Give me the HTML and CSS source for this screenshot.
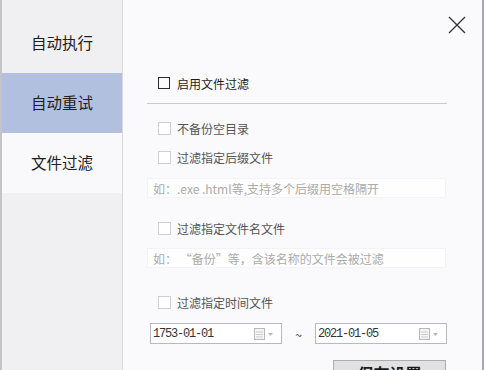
FILE: index.html
```html
<!DOCTYPE html>
<html lang="zh-CN">

<head>
    <meta charset="UTF-8">
    <meta name="viewport" content="width=device-width, initial-scale=1.0">
    <title>设置</title>
    <link rel="stylesheet" href="styles.css">
</head>

<body>
    <div class="window">
        <div class="sidebar">
            <div class="nav-item">自动执行</div>
            <div class="nav-item hover">自动重试</div>
            <div class="nav-item active">文件过滤</div>
        </div>
        <div class="panel">
            <div class="panel-head">
                <span class="close">
                    <svg width="18" height="18" viewBox="0 0 18 18">
                        <path d="M1 1 L17 17 M17 1 L1 17" stroke="#333" stroke-width="1.3" fill="none"/>
                    </svg>
                </span>
            </div>
            <div class="form">
                <label class="check-row main">
                    <span class="box"></span>启用文件过滤
                </label>
                <div class="divider"></div>
                <label class="check-row r-empty">
                    <span class="box"></span>不备份空目录
                </label>
                <label class="check-row r-suffix">
                    <span class="box"></span>过滤指定后缀文件
                </label>
                <div class="text-input in-suffix">如：.exe .html等,支持多个后缀用空格隔开</div>
                <label class="check-row r-name">
                    <span class="box"></span>过滤指定文件名文件
                </label>
                <div class="text-input in-name">如：&nbsp;&ldquo;备份&rdquo;等，含该名称的文件会被过滤</div>
                <label class="check-row r-time">
                    <span class="box"></span>过滤指定时间文件
                </label>
                <div class="date-row">
                    <div class="date">
                        <span class="date-text">1753-01-01</span>
                        <svg class="cal" width="22" height="12" viewBox="0 0 22 12">
                            <rect x="0.5" y="0.5" width="10" height="11" fill="#f4f4f4" stroke="#b8b8b8"/>
                            <path d="M2 4 H9 M2 6.5 H9 M2 9 H9" stroke="#cfcfcf" stroke-width="1"/>
                            <path d="M14 5 L19 5 L16.5 8 Z" fill="#b8b8b8"/>
                        </svg>
                    </div>
                    <span class="tilde">~</span>
                    <div class="date">
                        <span class="date-text">2021-01-05</span>
                        <svg class="cal" width="22" height="12" viewBox="0 0 22 12">
                            <rect x="0.5" y="0.5" width="10" height="11" fill="#f4f4f4" stroke="#b8b8b8"/>
                            <path d="M2 4 H9 M2 6.5 H9 M2 9 H9" stroke="#cfcfcf" stroke-width="1"/>
                            <path d="M14 5 L19 5 L16.5 8 Z" fill="#b8b8b8"/>
                        </svg>
                    </div>
                </div>
                <div class="actions">
                    <button class="save">保存设置</button>
                </div>
            </div>
        </div>
    </div>
</body>

</html>
```

FILE: styles.css
```css
* {
    margin: 0;
    padding: 0;
    box-sizing: border-box;
}
body {
    width: 484px;
    height: 370px;
    overflow: hidden;
    font-family: "Noto Sans CJK SC", "Noto Sans", sans-serif;
    background-color: #faf9fb;
}
.window {
    display: flex;
    height: 370px;
    border-left: 2px solid #c4c3c7;
    border-right: 2px solid #a9a8ac;
    overflow: hidden;
}
.sidebar {
    width: 121px;
    flex-shrink: 0;
    padding-top: 13px;
    background-color: #f0eff2;
    border-right: 1px solid #dad8dd;
}
.sidebar .nav-item {
    height: 60px;
    display: flex;
    align-items: center;
    justify-content: center;
    font-size: 15.5px;
    color: #1e1e1e;
    padding-bottom: 2px;
}
.sidebar .nav-item.hover {
    background-color: #b1c0de;
}
.sidebar .nav-item.active {
    background-color: #f9f8fa;
}
.panel {
    flex: 1;
    min-width: 0;
}
.panel .panel-head {
    height: 50px;
    display: flex;
    justify-content: flex-end;
    align-items: center;
    padding-right: 16px;
}
.panel .close {
    display: block;
    width: 18px;
    height: 18px;
    cursor: pointer;
}
.panel .close svg {
    display: block;
}
.form {
    padding-left: 24px;
    width: 324px;
}
.check-row {
    display: flex;
    align-items: center;
    height: 20px;
    padding-left: 11px;
    font-size: 12px;
    color: #555;
}
.check-row .box {
    width: 13px;
    height: 13px;
    margin-right: 6px;
    border: 1px solid #cfcfd2;
    background-color: #fff;
}
.check-row.main {
    margin-top: 23px;
    color: #1e1e1e;
}
.check-row.main .box {
    width: 12px;
    height: 12px;
    border-color: #2a2a2a;
    background-color: transparent;
    margin-right: 7px;
}
.divider {
    height: 1px;
    margin-top: 10px;
    background-color: #cbc9cd;
}
.check-row.r-empty {
    margin-top: 14px;
}
.check-row.r-suffix {
    margin-top: 9px;
}
.check-row.r-name {
    margin-top: 20px;
}
.check-row.r-time {
    margin-top: 24px;
}
.text-input {
    height: 20px;
    width: 299px;
    margin-top: 11px;
    padding-left: 5px;
    display: flex;
    align-items: center;
    font-size: 12px;
    color: #ababab;
    background-color: #fefefe;
    border: 1px solid #f3f2f4;
}
.text-input.in-name {
    margin-top: 10px;
}
.date-row {
    display: flex;
    align-items: center;
    margin-top: 11px;
    padding-left: 3px;
}
.date {
    width: 132px;
    height: 21px;
    display: flex;
    align-items: center;
    justify-content: space-between;
    padding: 0 5px 0 2px;
    background-color: #fff;
    border: 1px solid #b9b9bc;
}
.date .date-text {
    font-family: "Liberation Mono", monospace;
    font-size: 12px;
    letter-spacing: -1.2px;
    color: #333;
}
.date .cal {
    display: block;
}
.tilde {
    width: 33px;
    text-align: center;
    font-size: 12px;
    color: #333;
    padding-top: 1px;
}
.actions {
    display: flex;
    justify-content: flex-end;
    margin-top: 16px;
    width: 299px;
}
.save {
    width: 113px;
    height: 28px;
    font-family: "Noto Sans CJK SC", sans-serif;
    font-size: 16px;
    font-weight: bold;
    color: #1a1a1a;
    background-color: #e1e1e1;
    border: 1px solid #adadad;
    padding-bottom: 2px;
}
```
